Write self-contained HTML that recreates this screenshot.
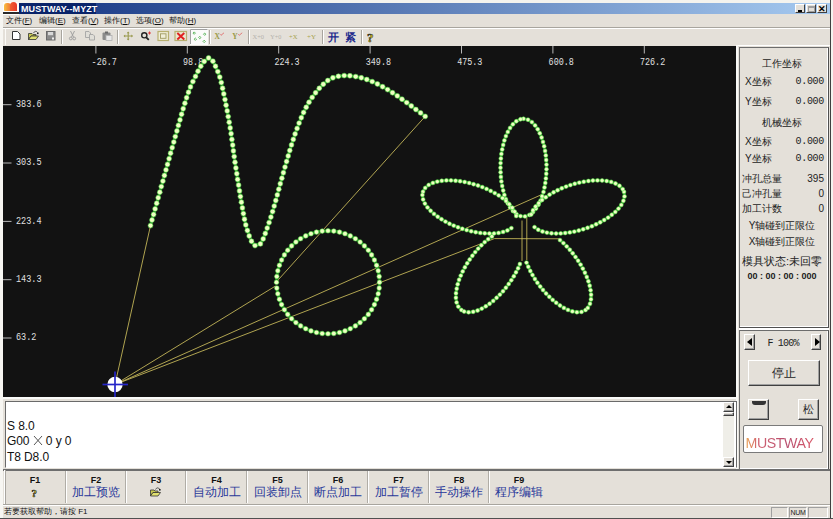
<!DOCTYPE html>
<html><head><meta charset="utf-8">
<style>
*{margin:0;padding:0;box-sizing:border-box}
html,body{width:833px;height:519px;overflow:hidden;background:#e4e0d9;font-family:"Liberation Sans",sans-serif;color:#000}
.a{position:absolute}
.cv{position:absolute;left:0;top:0}
.title{left:19px;top:3px;width:811px;height:11px;background:linear-gradient(to right,#0a246a 0px,#0a246a 77px,#22428c 77px,#a6caf0 811px)}
.ttext{left:21px;top:2px;font-size:9px;font-weight:bold;color:#fff;line-height:14px;letter-spacing:0.1px}
.wbtn{top:4px;width:10px;height:9px;background:#e4e0d9;border-top:1px solid #fff;border-left:1px solid #fff;border-right:1px solid #404040;border-bottom:1px solid #404040}
.menu{font-size:8px;line-height:10px;top:14px;color:#111}
.sep{width:2px;border-left:1px solid #a0a0a0;border-right:1px solid #fff}
.panel{font-size:10px;line-height:12px;color:#222}
.t{white-space:nowrap}
.fk{top:470px;height:34px;text-align:center}
.fkl{font-size:9px;font-weight:bold;line-height:10px;margin-top:5px;color:#111}
.fkt{font-size:12px;line-height:14px;color:#28389a;margin-top:0px}
.btn{background:#e4e0d9;border-top:1px solid #fff;border-left:1px solid #fff;border-right:1px solid #404040;border-bottom:1px solid #404040;box-shadow:inset -1px -1px 0 #a0a0a0}
</style></head><body>
<!-- window frame -->
<div class="a" style="left:0;top:0;width:833px;height:3px;background:#f4f3ee"></div>
<div class="a" style="left:0;top:0;width:3px;height:519px;background:#f7f6f2"></div>
<div class="a" style="left:830px;top:0;width:1px;height:519px;background:#404040"></div>
<div class="a" style="left:831px;top:0;width:2px;height:519px;background:#f4f3ee"></div>
<!-- title -->
<div class="a title"></div>
<div class="a" style="left:3px;top:2px;width:16px;height:13px;background:#fdfdfb">
  <div class="a" style="left:1px;top:1px;width:7px;height:8px;border-radius:3px 3px 0 1px;background:linear-gradient(to right,#f8c040,#f07030)"></div>
  <div class="a" style="left:7px;top:0px;width:7px;height:9px;border-radius:4px 4px 0 0;background:linear-gradient(to right,#f06030,#e83828)"></div>
  <div class="a" style="left:0px;top:10px;width:16px;height:2px;background:#2a2a2a"></div>
</div>
<div class="a ttext">MUSTWAY--MYZT</div>
<div class="a wbtn" style="left:795px"><div class="a" style="left:2px;top:5px;width:4px;height:2px;background:#000"></div></div>
<div class="a wbtn" style="left:806px"><div class="a" style="left:1px;top:1px;width:7px;height:6px;border:1px solid #a0a0a0;border-top-width:2px"></div></div>
<div class="a wbtn" style="left:817px;font-size:9px;line-height:8px;text-align:center;font-weight:bold">✕</div>
<!-- menu -->
<div class="a menu" style="left:6px;top:16px">文件(<u>F</u>)</div>
<div class="a menu" style="left:39px;top:16px">编辑(<u>E</u>)</div>
<div class="a menu" style="left:72px;top:16px">查看(<u>V</u>)</div>
<div class="a menu" style="left:104px;top:16px">操作(<u>T</u>)</div>
<div class="a menu" style="left:136px;top:16px">选项(<u>O</u>)</div>
<div class="a menu" style="left:169px;top:16px">帮助(<u>H</u>)</div>
<div class="a" style="left:3px;top:27px;width:827px;height:1px;background:#a8a59e"></div>
<div class="a" style="left:3px;top:28px;width:827px;height:1px;background:#fff"></div>
<!-- toolbar -->
<svg class="a" style="left:0;top:0" width="833" height="46" viewBox="0 0 833 46">
<g shape-rendering="crispEdges">
<rect x="5" y="28" width="1" height="17" fill="#fbfaf7"/>
<rect x="61" y="30" width="1" height="14" fill="#a8a59e"/><rect x="62" y="30" width="1" height="14" fill="#fff"/>
<rect x="117" y="30" width="1" height="14" fill="#a8a59e"/><rect x="118" y="30" width="1" height="14" fill="#fff"/>
<rect x="209" y="30" width="1" height="14" fill="#a8a59e"/><rect x="210" y="30" width="1" height="14" fill="#fff"/>
<rect x="248" y="30" width="1" height="14" fill="#a8a59e"/><rect x="249" y="30" width="1" height="14" fill="#fff"/>
<rect x="322" y="30" width="1" height="14" fill="#a8a59e"/><rect x="323" y="30" width="1" height="14" fill="#fff"/>
<rect x="361" y="30" width="1" height="14" fill="#a8a59e"/><rect x="362" y="30" width="1" height="14" fill="#fff"/>
</g>
<!-- new -->
<path d="M12.5 31.5H17.5L20 34V39.5H12.5Z" fill="#fff" stroke="#333" stroke-width="1"/>
<!-- open -->
<path d="M28.5 33.5H32L33 34.5H36V36H31L28.5 39.5Z" fill="#c8c850" stroke="#333" stroke-width="0.8"/>
<path d="M28.5 39.5L31 36H38.5L36 39.5Z" fill="#e0e070" stroke="#333" stroke-width="0.8"/>
<path d="M33.5 33C34.5 31 36.5 30.8 37.5 32.5" fill="none" stroke="#333" stroke-width="0.8"/><rect x="37" y="32.5" width="1.6" height="1.6" fill="#222"/>
<!-- save -->
<rect x="46.5" y="31.5" width="8.5" height="8.5" fill="#8a8a8a" stroke="#6a6a6a" stroke-width="1"/>
<rect x="48" y="32" width="5" height="3.2" fill="#d8d8d8"/><rect x="52" y="37.5" width="2" height="2" fill="#eee"/>
<!-- cut -->
<g stroke="#9a9a9a" stroke-width="0.9" fill="none"><path d="M70.5 31L73.5 37M74.5 31L71.5 37"/><circle cx="70.8" cy="38.5" r="1.4"/><circle cx="74.2" cy="38.5" r="1.4"/></g>
<!-- copy -->
<g fill="#e0ded8" stroke="#a5a5a5" stroke-width="0.9"><path d="M85.5 31.5H89L90.5 33V37.5H85.5Z"/><path d="M89.5 34.5H93L94.5 36V40H89.5Z"/></g>
<!-- paste -->
<rect x="102.5" y="32.5" width="8" height="7.5" rx="1" fill="#8a8a8a"/><rect x="105" y="31.5" width="3" height="2" fill="#6a6a6a"/>
<rect x="106" y="35.5" width="6" height="5" fill="#e8e8e8" stroke="#b0b0b0" stroke-width="0.8"/>
<!-- move -->
<g stroke="#9a9a50" stroke-width="1.1" fill="#9a9a50"><path d="M124 36H132.5M128.2 32V40" fill="none"/><path d="M128.2 31.5L126.8 33.2H129.6Z M128.2 40.5L126.8 38.8H129.6Z M123.5 36L125.2 34.6V37.4Z M133 36L131.3 34.6V37.4Z" stroke="none"/></g>
<!-- zoom -->
<circle cx="144.3" cy="35.3" r="2.6" fill="none" stroke="#222" stroke-width="1.4"/><path d="M146.2 37.3L148.8 39.9" stroke="#222" stroke-width="1.8"/>
<path d="M149.5 31.5V34.5M148 33H151" stroke="#e04040" stroke-width="1"/>
<!-- rect -->
<rect x="158" y="31.5" width="10.5" height="9" fill="#efeed8" stroke="#b8b070" stroke-width="1.2"/><rect x="160.5" y="33.8" width="5.5" height="4.5" fill="none" stroke="#a09a60" stroke-width="0.9"/>
<!-- red x -->
<rect x="175" y="31.5" width="11.5" height="9" fill="#eae6d0" stroke="#b8b070" stroke-width="1.2"/><path d="M177.3 33L184.3 39.5M184.3 33L177.3 39.5" stroke="#e02020" stroke-width="1.9"/>
<!-- dotted (pressed) -->
<rect x="190" y="29" width="18" height="16" fill="#fbfbfa"/><path d="M190.5 44V29.5H207.5" fill="none" stroke="#a0a0a0" stroke-width="1"/>
<g fill="none" stroke="#50b050" stroke-width="0.9"><path d="M194.2 31.9L195.4 33.1L194.2 34.3L193 33.1Z"/><path d="M204.7 33L205.9 34.2L204.7 35.4L203.5 34.2Z"/><path d="M199.8 36.3L201 37.5L199.8 38.7L198.6 37.5Z"/><path d="M195.3 38L196.5 39.2L195.3 40.4L194.1 39.2Z"/><path d="M204.2 40.2L205.4 41.4L204.2 42.6L203 41.4Z"/></g>
<!-- X check Y check -->
<g font-family="Liberation Serif" font-weight="bold" font-size="7.5" fill="#9a9a48"><text x="214.5" y="38.5">X</text><text x="232.3" y="38.5">Y</text></g>
<g stroke="#e06060" stroke-width="0.8" fill="none"><path d="M220 34.2L221 35.3L224 32.8"/><path d="M238.2 34.2L239.2 35.3L242.2 32.8"/></g>
<!-- X+0 etc -->
<g font-family="Liberation Serif" font-size="7" fill="#b4b2ac"><text x="252.5" y="39" textLength="11.5" lengthAdjust="spacingAndGlyphs">X+0</text><text x="270.3" y="39" textLength="11" lengthAdjust="spacingAndGlyphs">Y+0</text></g>
<g font-family="Liberation Serif" font-size="7" fill="#a8a450"><text x="289" y="39" textLength="8.5" lengthAdjust="spacingAndGlyphs">+X</text><text x="307" y="39" textLength="9" lengthAdjust="spacingAndGlyphs">+Y</text></g>
<!-- kai jin -->
<g font-size="11" font-weight="bold" fill="#1e2a8c"><text x="327.5" y="40.5">开</text><text x="345" y="40.5">紧</text></g>
<!-- help -->
<text x="367" y="41.5" font-family="Liberation Serif" font-weight="bold" font-size="13" fill="#e8d820" stroke="#222" stroke-width="0.6">?</text>
</svg>
<svg class="cv" width="833" height="519" viewBox="0 0 833 519">
<rect x="3" y="46" width="733" height="351" fill="#121212"/>
<g stroke="#b8b8b8" stroke-width="1"><line x1="95.9" y1="46" x2="95.9" y2="53.5"/><line x1="187.3" y1="46" x2="187.3" y2="53.5"/><line x1="278.7" y1="46" x2="278.7" y2="53.5"/><line x1="370.1" y1="46" x2="370.1" y2="53.5"/><line x1="461.5" y1="46" x2="461.5" y2="53.5"/><line x1="552.9" y1="46" x2="552.9" y2="53.5"/><line x1="644.3" y1="46" x2="644.3" y2="53.5"/><line x1="3" y1="104.7" x2="11.5" y2="104.7"/><line x1="3" y1="163.0" x2="11.5" y2="163.0"/><line x1="3" y1="221.4" x2="11.5" y2="221.4"/><line x1="3" y1="279.7" x2="11.5" y2="279.7"/><line x1="3" y1="338.0" x2="11.5" y2="338.0"/></g>
<g fill="#e0e0e0" font-family="Liberation Mono" font-size="10.5"><text x="91.6" y="65.3" textLength="25.2" lengthAdjust="spacingAndGlyphs">-26.7</text><text x="183.0" y="65.3" textLength="20.2" lengthAdjust="spacingAndGlyphs">98.8</text><text x="274.4" y="65.3" textLength="25.2" lengthAdjust="spacingAndGlyphs">224.3</text><text x="365.8" y="65.3" textLength="25.2" lengthAdjust="spacingAndGlyphs">349.8</text><text x="457.2" y="65.3" textLength="25.2" lengthAdjust="spacingAndGlyphs">475.3</text><text x="548.6" y="65.3" textLength="25.2" lengthAdjust="spacingAndGlyphs">600.8</text><text x="640.0" y="65.3" textLength="25.2" lengthAdjust="spacingAndGlyphs">726.2</text><text x="16" y="106.8" textLength="25.5" lengthAdjust="spacingAndGlyphs">383.6</text><text x="16" y="165.1" textLength="25.5" lengthAdjust="spacingAndGlyphs">303.5</text><text x="16" y="223.5" textLength="25.5" lengthAdjust="spacingAndGlyphs">223.4</text><text x="16" y="281.8" textLength="25.5" lengthAdjust="spacingAndGlyphs">143.3</text><text x="16" y="340.1" textLength="20.4" lengthAdjust="spacingAndGlyphs">63.2</text></g>
<g stroke="#ccbe5c" stroke-width="0.85" fill="none"><line x1="115" y1="384.5" x2="150.5" y2="225.6"/><line x1="425.2" y1="116.4" x2="276.3" y2="282"/><line x1="115" y1="384.5" x2="275.5" y2="286"/><line x1="115" y1="384.5" x2="543" y2="194"/><line x1="115" y1="384.5" x2="494.4" y2="238.6"/><line x1="494.4" y1="238.6" x2="560.5" y2="238.8"/><line x1="522" y1="220.5" x2="522" y2="261"/><line x1="526.8" y1="216.6" x2="526.8" y2="260"/></g>
<path d="M150.5 225.6L152.0 220.0M152.0 220.0L153.6 214.5M153.6 214.5L155.1 208.9M155.1 208.9L156.7 203.3M156.7 203.3L158.2 197.8M158.2 197.8L159.8 192.2M159.8 192.2L161.3 186.6M161.3 186.6L162.9 181.1M162.9 181.1L164.4 175.5M164.4 175.5L166.0 169.9M166.0 169.9L167.5 164.4M167.5 164.4L169.1 158.8M169.1 158.8L170.6 153.2M170.6 153.2L172.2 147.7M172.2 147.7L173.8 142.1M173.8 142.1L175.3 136.6M175.3 136.6L176.9 131.0M176.9 131.0L178.4 125.4M178.4 125.4L180.0 119.9M180.0 119.9L181.6 114.3M181.6 114.3L183.2 108.8M183.2 108.8L184.9 103.2M184.9 103.2L186.6 97.7M186.6 97.7L188.5 92.3M188.5 92.3L190.5 86.9M190.5 86.9L192.9 81.6M192.9 81.6L195.5 76.4M195.5 76.4L198.0 71.2M198.0 71.2L200.8 66.2M200.8 66.2L204.2 61.5M204.2 61.5L208.6 57.9M208.6 57.9L212.9 61.2M212.9 61.2L215.5 66.3M215.5 66.3L217.8 71.6M217.8 71.6L219.8 77.1M219.8 77.1L221.3 82.6M221.3 82.6L222.6 88.3M222.6 88.3L223.8 93.9M223.8 93.9L225.0 99.6M225.0 99.6L226.1 105.2M226.1 105.2L227.2 110.9M227.2 110.9L228.2 116.6M228.2 116.6L229.2 122.3M229.2 122.3L230.2 128.0M230.2 128.0L231.1 133.7M231.1 133.7L231.9 139.4M231.9 139.4L232.7 145.1M232.7 145.1L233.4 150.9M233.4 150.9L234.2 156.6M234.2 156.6L235.0 162.3M235.0 162.3L235.9 168.0M235.9 168.0L236.8 173.7M236.8 173.7L237.6 179.4M237.6 179.4L238.6 185.1M238.6 185.1L239.5 190.9M239.5 190.9L240.4 196.6M240.4 196.6L241.4 202.2M241.4 202.2L242.4 207.9M242.4 207.9L243.4 213.6M243.4 213.6L244.5 219.3M244.5 219.3L245.8 224.9M245.8 224.9L247.4 230.5M247.4 230.5L249.2 236.0M249.2 236.0L251.5 241.3M251.5 241.3L255.0 245.6M255.0 245.6L260.4 243.9M260.4 243.9L263.2 238.9M263.2 238.9L265.3 233.5M265.3 233.5L267.2 228.1M267.2 228.1L269.1 222.6M269.1 222.6L270.9 217.1M270.9 217.1L272.6 211.6M272.6 211.6L274.2 206.1M274.2 206.1L275.8 200.5M275.8 200.5L277.3 194.9M277.3 194.9L278.8 189.3M278.8 189.3L280.3 183.8M280.3 183.8L281.9 178.2M281.9 178.2L283.4 172.7M283.4 172.7L285.0 167.1M285.0 167.1L286.6 161.5M286.6 161.5L288.2 156.0M288.2 156.0L289.8 150.5M289.8 150.5L291.5 144.9M291.5 144.9L293.3 139.4M293.3 139.4L295.1 134.0M295.1 134.0L297.1 128.5M297.1 128.5L299.1 123.1M299.1 123.1L301.3 117.7M301.3 117.7L303.6 112.5M303.6 112.5L306.2 107.3M306.2 107.3L309.0 102.3M309.0 102.3L312.2 97.4M312.2 97.4L315.6 92.8M315.6 92.8L319.3 88.3M319.3 88.3L323.3 84.2M323.3 84.2L327.8 80.5M327.8 80.5L332.9 77.8M332.9 77.8L338.4 76.3M338.4 76.3L344.2 75.6M344.2 75.6L349.9 75.8M349.9 75.8L355.7 76.6M355.7 76.6L361.3 77.8M361.3 77.8L366.8 79.5M366.8 79.5L372.2 81.6M372.2 81.6L377.4 84.0M377.4 84.0L382.6 86.7M382.6 86.7L387.6 89.6M387.6 89.6L392.5 92.7M392.5 92.7L397.3 95.9M397.3 95.9L402.0 99.2M402.0 99.2L406.7 102.6M406.7 102.6L411.3 106.0M411.3 106.0L415.9 109.5M415.9 109.5L420.6 112.9M420.6 112.9L425.2 116.4M276.5 282.3L276.8 276.5M276.8 276.5L277.8 270.8M277.8 270.8L279.4 265.3M279.4 265.3L281.6 260.0M281.6 260.0L284.4 254.9M284.4 254.9L287.7 250.2M287.7 250.2L291.6 245.9M291.6 245.9L295.9 242.0M295.9 242.0L300.6 238.7M300.6 238.7L305.7 235.9M305.7 235.9L311.0 233.7M311.0 233.7L316.5 232.1M316.5 232.1L322.2 231.1M322.2 231.1L328.0 230.8M328.0 230.8L333.8 231.1M333.8 231.1L339.5 232.1M339.5 232.1L345.0 233.7M345.0 233.7L350.3 235.9M350.3 235.9L355.4 238.7M355.4 238.7L360.1 242.0M360.1 242.0L364.4 245.9M364.4 245.9L368.3 250.2M368.3 250.2L371.6 254.9M371.6 254.9L374.4 260.0M374.4 260.0L376.6 265.3M376.6 265.3L378.2 270.8M378.2 270.8L379.2 276.5M379.2 276.5L379.5 282.3M379.5 282.3L379.2 288.1M379.2 288.1L378.2 293.8M378.2 293.8L376.6 299.3M376.6 299.3L374.4 304.6M374.4 304.6L371.6 309.7M371.6 309.7L368.3 314.4M368.3 314.4L364.4 318.7M364.4 318.7L360.1 322.6M360.1 322.6L355.4 325.9M355.4 325.9L350.3 328.7M350.3 328.7L345.0 330.9M345.0 330.9L339.5 332.5M339.5 332.5L333.8 333.5M333.8 333.5L328.0 333.8M328.0 333.8L322.2 333.5M322.2 333.5L316.5 332.5M316.5 332.5L311.0 330.9M311.0 330.9L305.7 328.7M305.7 328.7L300.6 325.9M300.6 325.9L295.9 322.6M295.9 322.6L291.6 318.7M291.6 318.7L287.7 314.4M287.7 314.4L284.4 309.7M284.4 309.7L281.6 304.6M281.6 304.6L279.4 299.3M279.4 299.3L277.8 293.8M277.8 293.8L276.8 288.1M523.5 118.8L528.0 119.7M528.0 119.7L531.9 122.1M531.9 122.1L535.1 125.4M535.1 125.4L537.7 129.2M537.7 129.2L539.8 133.3M539.8 133.3L541.6 137.5M541.6 137.5L543.0 141.9M543.0 141.9L544.2 146.3M544.2 146.3L545.1 150.9M545.1 150.9L545.8 155.4M545.8 155.4L546.2 160.0M546.2 160.0L546.5 164.6M546.5 164.6L546.5 169.2M546.5 169.2L546.3 173.8M546.3 173.8L545.9 178.4M545.9 178.4L545.3 182.9M545.3 182.9L544.5 187.4M544.5 187.4L543.5 191.9M543.5 191.9L542.1 196.3M542.1 196.3L540.5 200.6M540.5 200.6L538.5 204.7M538.5 204.7L536.0 208.6M536.0 208.6L533.0 212.1M533.0 212.1L529.4 214.9M529.4 214.9L525.0 216.4M525.0 216.4L520.5 216.1M520.5 216.1L516.4 214.1M516.4 214.1L512.9 211.0M512.9 211.0L510.1 207.4M510.1 207.4L507.8 203.4M507.8 203.4L505.9 199.2M505.9 199.2L504.4 194.9M504.4 194.9L503.2 190.5M503.2 190.5L502.2 186.0M502.2 186.0L501.4 181.4M501.4 181.4L500.9 176.9M500.9 176.9L500.6 172.3M500.6 172.3L500.5 167.7M500.5 167.7L500.6 163.1M500.6 163.1L500.9 158.5M500.9 158.5L501.4 153.9M501.4 153.9L502.2 149.4M502.2 149.4L503.2 144.9M503.2 144.9L504.4 140.4M504.4 140.4L505.9 136.1M505.9 136.1L507.8 131.9M507.8 131.9L510.1 127.9M510.1 127.9L512.9 124.3M512.9 124.3L516.3 121.2M516.3 121.2L520.5 119.2M624.0 191.8L624.5 196.4M624.5 196.4L623.4 200.8M623.4 200.8L621.3 204.9M621.3 204.9L618.5 208.6M618.5 208.6L615.3 211.9M615.3 211.9L611.8 214.8M611.8 214.8L608.1 217.6M608.1 217.6L604.2 220.0M604.2 220.0L600.2 222.3M600.2 222.3L596.1 224.3M596.1 224.3L591.9 226.2M591.9 226.2L587.6 227.8M587.6 227.8L583.2 229.3M583.2 229.3L578.8 230.5M578.8 230.5L574.3 231.6M574.3 231.6L569.8 232.4M569.8 232.4L565.2 233.0M565.2 233.0L560.7 233.4M560.7 233.4L556.1 233.5M556.1 233.5L551.5 233.3M551.5 233.3L546.9 232.6M546.9 232.6L542.5 231.5M542.5 231.5L538.2 229.7M538.2 229.7L534.5 227.1M531.2 214.5L533.0 210.3M533.0 210.3L535.6 206.5M535.6 206.5L538.7 203.1M538.7 203.1L542.1 200.0M542.1 200.0L545.8 197.2M545.8 197.2L549.6 194.6M549.6 194.6L553.6 192.3M553.6 192.3L557.6 190.2M557.6 190.2L561.8 188.3M561.8 188.3L566.1 186.6M566.1 186.6L570.4 185.1M570.4 185.1L574.8 183.7M574.8 183.7L579.3 182.6M579.3 182.6L583.8 181.7M583.8 181.7L588.4 181.0M588.4 181.0L592.9 180.5M592.9 180.5L597.5 180.4M597.5 180.4L602.1 180.5M602.1 180.5L606.7 181.0M606.7 181.0L611.2 181.9M611.2 181.9L615.5 183.5M615.5 183.5L619.5 185.8M619.5 185.8L622.7 189.1M585.6 310.0L581.5 311.9M581.5 311.9L576.9 312.2M576.9 312.2L572.4 311.4M572.4 311.4L568.0 309.9M568.0 309.9L563.9 307.9M563.9 307.9L560.0 305.5M560.0 305.5L556.2 302.8M556.2 302.8L552.7 299.9M552.7 299.9L549.3 296.8M549.3 296.8L546.1 293.5M546.1 293.5L543.0 290.0M543.0 290.0L540.2 286.5M540.2 286.5L537.4 282.8M537.4 282.8L534.9 279.0M534.9 279.0L532.5 275.0M532.5 275.0L530.3 271.0M530.3 271.0L528.3 266.8M528.3 266.8L526.5 262.6M560.0 240.1L563.4 243.1M563.4 243.1L566.7 246.4M566.7 246.4L569.8 249.8M569.8 249.8L572.7 253.3M572.7 253.3L575.5 257.0M575.5 257.0L578.1 260.7M578.1 260.7L580.6 264.6M580.6 264.6L582.8 268.6M582.8 268.6L584.9 272.7M584.9 272.7L586.8 277.0M586.8 277.0L588.4 281.3M588.4 281.3L589.7 285.7M589.7 285.7L590.6 290.2M590.6 290.2L591.1 294.8M591.1 294.8L591.0 299.3M591.0 299.3L590.0 303.8M590.0 303.8L587.8 307.9M461.4 310.0L458.3 306.6M458.3 306.6L456.6 302.4M456.6 302.4L455.9 297.8M455.9 297.8L456.0 293.2M456.0 293.2L456.7 288.7M456.7 288.7L457.7 284.2M457.7 284.2L459.1 279.8M459.1 279.8L460.8 275.6M460.8 275.6L462.7 271.4M462.7 271.4L464.9 267.3M464.9 267.3L467.2 263.3M467.2 263.3L469.7 259.5M469.7 259.5L472.4 255.7M472.4 255.7L475.2 252.1M475.2 252.1L478.2 248.6M478.2 248.6L481.4 245.3M481.4 245.3L484.7 242.1M484.7 242.1L488.2 239.1M488.2 239.1L491.9 236.4M519.9 264.0L518.1 268.2M518.1 268.2L516.0 272.3M516.0 272.3L513.8 276.3M513.8 276.3L511.3 280.2M511.3 280.2L508.7 284.0M508.7 284.0L505.9 287.7M505.9 287.7L503.0 291.2M503.0 291.2L499.9 294.6M499.9 294.6L496.6 297.8M496.6 297.8L493.2 300.9M493.2 300.9L489.6 303.7M489.6 303.7L485.8 306.3M485.8 306.3L481.8 308.6M481.8 308.6L477.6 310.5M477.6 310.5L473.2 311.8M473.2 311.8L468.6 312.3M468.6 312.3L464.1 311.5M423.0 191.8L425.2 187.9M425.2 187.9L428.7 184.9M428.7 184.9L432.9 182.9M432.9 182.9L437.3 181.6M437.3 181.6L441.8 180.8M441.8 180.8L446.4 180.4M446.4 180.4L451.0 180.4M451.0 180.4L455.6 180.7M455.6 180.7L460.1 181.2M460.1 181.2L464.7 182.0M464.7 182.0L469.2 183.0M469.2 183.0L473.6 184.2M473.6 184.2L478.0 185.5M478.0 185.5L482.3 187.1M482.3 187.1L486.6 188.9M486.6 188.9L490.7 190.9M490.7 190.9L494.8 193.1M494.8 193.1L498.7 195.4M498.7 195.4L502.5 198.1M502.5 198.1L506.0 201.0M506.0 201.0L509.3 204.2M509.3 204.2L512.3 207.7M512.3 207.7L514.7 211.6M514.7 211.6L516.2 216.0M511.4 228.1L507.4 230.4M507.4 230.4L503.1 231.9M503.1 231.9L498.6 232.9M498.6 232.9L494.0 233.4M494.0 233.4L489.4 233.5M489.4 233.5L484.8 233.3M484.8 233.3L480.3 232.9M480.3 232.9L475.7 232.2M475.7 232.2L471.2 231.3M471.2 231.3L466.7 230.1M466.7 230.1L462.3 228.8M462.3 228.8L458.0 227.3M458.0 227.3L453.7 225.6M453.7 225.6L449.5 223.7M449.5 223.7L445.5 221.6M445.5 221.6L441.5 219.2M441.5 219.2L437.7 216.7M437.7 216.7L434.0 213.9M434.0 213.9L430.6 210.8M430.6 210.8L427.5 207.4M427.5 207.4L424.9 203.6M424.9 203.6L423.1 199.4M423.1 199.4L422.4 194.9" stroke="#1d7a1d" stroke-width="3.2" fill="none" stroke-linecap="round"/>
<g fill="#f0ffc4" stroke="#4ee044" stroke-width="0.55"><circle cx="150.5" cy="225.6" r="2.45"/><circle cx="152.0" cy="220.0" r="2.45"/><circle cx="153.6" cy="214.5" r="2.45"/><circle cx="155.1" cy="208.9" r="2.45"/><circle cx="156.7" cy="203.3" r="2.45"/><circle cx="158.2" cy="197.8" r="2.45"/><circle cx="159.8" cy="192.2" r="2.45"/><circle cx="161.3" cy="186.6" r="2.45"/><circle cx="162.9" cy="181.1" r="2.45"/><circle cx="164.4" cy="175.5" r="2.45"/><circle cx="166.0" cy="169.9" r="2.45"/><circle cx="167.5" cy="164.4" r="2.45"/><circle cx="169.1" cy="158.8" r="2.45"/><circle cx="170.6" cy="153.2" r="2.45"/><circle cx="172.2" cy="147.7" r="2.45"/><circle cx="173.8" cy="142.1" r="2.45"/><circle cx="175.3" cy="136.6" r="2.45"/><circle cx="176.9" cy="131.0" r="2.45"/><circle cx="178.4" cy="125.4" r="2.45"/><circle cx="180.0" cy="119.9" r="2.45"/><circle cx="181.6" cy="114.3" r="2.45"/><circle cx="183.2" cy="108.8" r="2.45"/><circle cx="184.9" cy="103.2" r="2.45"/><circle cx="186.6" cy="97.7" r="2.45"/><circle cx="188.5" cy="92.3" r="2.45"/><circle cx="190.5" cy="86.9" r="2.45"/><circle cx="192.9" cy="81.6" r="2.45"/><circle cx="195.5" cy="76.4" r="2.45"/><circle cx="198.0" cy="71.2" r="2.45"/><circle cx="200.8" cy="66.2" r="2.45"/><circle cx="204.2" cy="61.5" r="2.45"/><circle cx="208.6" cy="57.9" r="2.45"/><circle cx="212.9" cy="61.2" r="2.45"/><circle cx="215.5" cy="66.3" r="2.45"/><circle cx="217.8" cy="71.6" r="2.45"/><circle cx="219.8" cy="77.1" r="2.45"/><circle cx="221.3" cy="82.6" r="2.45"/><circle cx="222.6" cy="88.3" r="2.45"/><circle cx="223.8" cy="93.9" r="2.45"/><circle cx="225.0" cy="99.6" r="2.45"/><circle cx="226.1" cy="105.2" r="2.45"/><circle cx="227.2" cy="110.9" r="2.45"/><circle cx="228.2" cy="116.6" r="2.45"/><circle cx="229.2" cy="122.3" r="2.45"/><circle cx="230.2" cy="128.0" r="2.45"/><circle cx="231.1" cy="133.7" r="2.45"/><circle cx="231.9" cy="139.4" r="2.45"/><circle cx="232.7" cy="145.1" r="2.45"/><circle cx="233.4" cy="150.9" r="2.45"/><circle cx="234.2" cy="156.6" r="2.45"/><circle cx="235.0" cy="162.3" r="2.45"/><circle cx="235.9" cy="168.0" r="2.45"/><circle cx="236.8" cy="173.7" r="2.45"/><circle cx="237.6" cy="179.4" r="2.45"/><circle cx="238.6" cy="185.1" r="2.45"/><circle cx="239.5" cy="190.9" r="2.45"/><circle cx="240.4" cy="196.6" r="2.45"/><circle cx="241.4" cy="202.2" r="2.45"/><circle cx="242.4" cy="207.9" r="2.45"/><circle cx="243.4" cy="213.6" r="2.45"/><circle cx="244.5" cy="219.3" r="2.45"/><circle cx="245.8" cy="224.9" r="2.45"/><circle cx="247.4" cy="230.5" r="2.45"/><circle cx="249.2" cy="236.0" r="2.45"/><circle cx="251.5" cy="241.3" r="2.45"/><circle cx="255.0" cy="245.6" r="2.45"/><circle cx="260.4" cy="243.9" r="2.45"/><circle cx="263.2" cy="238.9" r="2.45"/><circle cx="265.3" cy="233.5" r="2.45"/><circle cx="267.2" cy="228.1" r="2.45"/><circle cx="269.1" cy="222.6" r="2.45"/><circle cx="270.9" cy="217.1" r="2.45"/><circle cx="272.6" cy="211.6" r="2.45"/><circle cx="274.2" cy="206.1" r="2.45"/><circle cx="275.8" cy="200.5" r="2.45"/><circle cx="277.3" cy="194.9" r="2.45"/><circle cx="278.8" cy="189.3" r="2.45"/><circle cx="280.3" cy="183.8" r="2.45"/><circle cx="281.9" cy="178.2" r="2.45"/><circle cx="283.4" cy="172.7" r="2.45"/><circle cx="285.0" cy="167.1" r="2.45"/><circle cx="286.6" cy="161.5" r="2.45"/><circle cx="288.2" cy="156.0" r="2.45"/><circle cx="289.8" cy="150.5" r="2.45"/><circle cx="291.5" cy="144.9" r="2.45"/><circle cx="293.3" cy="139.4" r="2.45"/><circle cx="295.1" cy="134.0" r="2.45"/><circle cx="297.1" cy="128.5" r="2.45"/><circle cx="299.1" cy="123.1" r="2.45"/><circle cx="301.3" cy="117.7" r="2.45"/><circle cx="303.6" cy="112.5" r="2.45"/><circle cx="306.2" cy="107.3" r="2.45"/><circle cx="309.0" cy="102.3" r="2.45"/><circle cx="312.2" cy="97.4" r="2.45"/><circle cx="315.6" cy="92.8" r="2.45"/><circle cx="319.3" cy="88.3" r="2.45"/><circle cx="323.3" cy="84.2" r="2.45"/><circle cx="327.8" cy="80.5" r="2.45"/><circle cx="332.9" cy="77.8" r="2.45"/><circle cx="338.4" cy="76.3" r="2.45"/><circle cx="344.2" cy="75.6" r="2.45"/><circle cx="349.9" cy="75.8" r="2.45"/><circle cx="355.7" cy="76.6" r="2.45"/><circle cx="361.3" cy="77.8" r="2.45"/><circle cx="366.8" cy="79.5" r="2.45"/><circle cx="372.2" cy="81.6" r="2.45"/><circle cx="377.4" cy="84.0" r="2.45"/><circle cx="382.6" cy="86.7" r="2.45"/><circle cx="387.6" cy="89.6" r="2.45"/><circle cx="392.5" cy="92.7" r="2.45"/><circle cx="397.3" cy="95.9" r="2.45"/><circle cx="402.0" cy="99.2" r="2.45"/><circle cx="406.7" cy="102.6" r="2.45"/><circle cx="411.3" cy="106.0" r="2.45"/><circle cx="415.9" cy="109.5" r="2.45"/><circle cx="420.6" cy="112.9" r="2.45"/><circle cx="425.2" cy="116.4" r="2.45"/><circle cx="276.5" cy="282.3" r="2.3"/><circle cx="276.8" cy="276.5" r="2.3"/><circle cx="277.8" cy="270.8" r="2.3"/><circle cx="279.4" cy="265.3" r="2.3"/><circle cx="281.6" cy="260.0" r="2.3"/><circle cx="284.4" cy="254.9" r="2.3"/><circle cx="287.7" cy="250.2" r="2.3"/><circle cx="291.6" cy="245.9" r="2.3"/><circle cx="295.9" cy="242.0" r="2.3"/><circle cx="300.6" cy="238.7" r="2.3"/><circle cx="305.7" cy="235.9" r="2.3"/><circle cx="311.0" cy="233.7" r="2.3"/><circle cx="316.5" cy="232.1" r="2.3"/><circle cx="322.2" cy="231.1" r="2.3"/><circle cx="328.0" cy="230.8" r="2.3"/><circle cx="333.8" cy="231.1" r="2.3"/><circle cx="339.5" cy="232.1" r="2.3"/><circle cx="345.0" cy="233.7" r="2.3"/><circle cx="350.3" cy="235.9" r="2.3"/><circle cx="355.4" cy="238.7" r="2.3"/><circle cx="360.1" cy="242.0" r="2.3"/><circle cx="364.4" cy="245.9" r="2.3"/><circle cx="368.3" cy="250.2" r="2.3"/><circle cx="371.6" cy="254.9" r="2.3"/><circle cx="374.4" cy="260.0" r="2.3"/><circle cx="376.6" cy="265.3" r="2.3"/><circle cx="378.2" cy="270.8" r="2.3"/><circle cx="379.2" cy="276.5" r="2.3"/><circle cx="379.5" cy="282.3" r="2.3"/><circle cx="379.2" cy="288.1" r="2.3"/><circle cx="378.2" cy="293.8" r="2.3"/><circle cx="376.6" cy="299.3" r="2.3"/><circle cx="374.4" cy="304.6" r="2.3"/><circle cx="371.6" cy="309.7" r="2.3"/><circle cx="368.3" cy="314.4" r="2.3"/><circle cx="364.4" cy="318.7" r="2.3"/><circle cx="360.1" cy="322.6" r="2.3"/><circle cx="355.4" cy="325.9" r="2.3"/><circle cx="350.3" cy="328.7" r="2.3"/><circle cx="345.0" cy="330.9" r="2.3"/><circle cx="339.5" cy="332.5" r="2.3"/><circle cx="333.8" cy="333.5" r="2.3"/><circle cx="328.0" cy="333.8" r="2.3"/><circle cx="322.2" cy="333.5" r="2.3"/><circle cx="316.5" cy="332.5" r="2.3"/><circle cx="311.0" cy="330.9" r="2.3"/><circle cx="305.7" cy="328.7" r="2.3"/><circle cx="300.6" cy="325.9" r="2.3"/><circle cx="295.9" cy="322.6" r="2.3"/><circle cx="291.6" cy="318.7" r="2.3"/><circle cx="287.7" cy="314.4" r="2.3"/><circle cx="284.4" cy="309.7" r="2.3"/><circle cx="281.6" cy="304.6" r="2.3"/><circle cx="279.4" cy="299.3" r="2.3"/><circle cx="277.8" cy="293.8" r="2.3"/><circle cx="276.8" cy="288.1" r="2.3"/><circle cx="523.5" cy="118.8" r="1.95"/><circle cx="528.0" cy="119.7" r="1.95"/><circle cx="531.9" cy="122.1" r="1.95"/><circle cx="535.1" cy="125.4" r="1.95"/><circle cx="537.7" cy="129.2" r="1.95"/><circle cx="539.8" cy="133.3" r="1.95"/><circle cx="541.6" cy="137.5" r="1.95"/><circle cx="543.0" cy="141.9" r="1.95"/><circle cx="544.2" cy="146.3" r="1.95"/><circle cx="545.1" cy="150.9" r="1.95"/><circle cx="545.8" cy="155.4" r="1.95"/><circle cx="546.2" cy="160.0" r="1.95"/><circle cx="546.5" cy="164.6" r="1.95"/><circle cx="546.5" cy="169.2" r="1.95"/><circle cx="546.3" cy="173.8" r="1.95"/><circle cx="545.9" cy="178.4" r="1.95"/><circle cx="545.3" cy="182.9" r="1.95"/><circle cx="544.5" cy="187.4" r="1.95"/><circle cx="543.5" cy="191.9" r="1.95"/><circle cx="542.1" cy="196.3" r="1.95"/><circle cx="540.5" cy="200.6" r="1.95"/><circle cx="538.5" cy="204.7" r="1.95"/><circle cx="536.0" cy="208.6" r="1.95"/><circle cx="533.0" cy="212.1" r="1.95"/><circle cx="529.4" cy="214.9" r="1.95"/><circle cx="525.0" cy="216.4" r="1.95"/><circle cx="520.5" cy="216.1" r="1.95"/><circle cx="516.4" cy="214.1" r="1.95"/><circle cx="512.9" cy="211.0" r="1.95"/><circle cx="510.1" cy="207.4" r="1.95"/><circle cx="507.8" cy="203.4" r="1.95"/><circle cx="505.9" cy="199.2" r="1.95"/><circle cx="504.4" cy="194.9" r="1.95"/><circle cx="503.2" cy="190.5" r="1.95"/><circle cx="502.2" cy="186.0" r="1.95"/><circle cx="501.4" cy="181.4" r="1.95"/><circle cx="500.9" cy="176.9" r="1.95"/><circle cx="500.6" cy="172.3" r="1.95"/><circle cx="500.5" cy="167.7" r="1.95"/><circle cx="500.6" cy="163.1" r="1.95"/><circle cx="500.9" cy="158.5" r="1.95"/><circle cx="501.4" cy="153.9" r="1.95"/><circle cx="502.2" cy="149.4" r="1.95"/><circle cx="503.2" cy="144.9" r="1.95"/><circle cx="504.4" cy="140.4" r="1.95"/><circle cx="505.9" cy="136.1" r="1.95"/><circle cx="507.8" cy="131.9" r="1.95"/><circle cx="510.1" cy="127.9" r="1.95"/><circle cx="512.9" cy="124.3" r="1.95"/><circle cx="516.3" cy="121.2" r="1.95"/><circle cx="520.5" cy="119.2" r="1.95"/><circle cx="624.0" cy="191.8" r="1.95"/><circle cx="624.5" cy="196.4" r="1.95"/><circle cx="623.4" cy="200.8" r="1.95"/><circle cx="621.3" cy="204.9" r="1.95"/><circle cx="618.5" cy="208.6" r="1.95"/><circle cx="615.3" cy="211.9" r="1.95"/><circle cx="611.8" cy="214.8" r="1.95"/><circle cx="608.1" cy="217.6" r="1.95"/><circle cx="604.2" cy="220.0" r="1.95"/><circle cx="600.2" cy="222.3" r="1.95"/><circle cx="596.1" cy="224.3" r="1.95"/><circle cx="591.9" cy="226.2" r="1.95"/><circle cx="587.6" cy="227.8" r="1.95"/><circle cx="583.2" cy="229.3" r="1.95"/><circle cx="578.8" cy="230.5" r="1.95"/><circle cx="574.3" cy="231.6" r="1.95"/><circle cx="569.8" cy="232.4" r="1.95"/><circle cx="565.2" cy="233.0" r="1.95"/><circle cx="560.7" cy="233.4" r="1.95"/><circle cx="556.1" cy="233.5" r="1.95"/><circle cx="551.5" cy="233.3" r="1.95"/><circle cx="546.9" cy="232.6" r="1.95"/><circle cx="542.5" cy="231.5" r="1.95"/><circle cx="538.2" cy="229.7" r="1.95"/><circle cx="534.5" cy="227.1" r="1.95"/><circle cx="531.2" cy="214.5" r="1.95"/><circle cx="533.0" cy="210.3" r="1.95"/><circle cx="535.6" cy="206.5" r="1.95"/><circle cx="538.7" cy="203.1" r="1.95"/><circle cx="542.1" cy="200.0" r="1.95"/><circle cx="545.8" cy="197.2" r="1.95"/><circle cx="549.6" cy="194.6" r="1.95"/><circle cx="553.6" cy="192.3" r="1.95"/><circle cx="557.6" cy="190.2" r="1.95"/><circle cx="561.8" cy="188.3" r="1.95"/><circle cx="566.1" cy="186.6" r="1.95"/><circle cx="570.4" cy="185.1" r="1.95"/><circle cx="574.8" cy="183.7" r="1.95"/><circle cx="579.3" cy="182.6" r="1.95"/><circle cx="583.8" cy="181.7" r="1.95"/><circle cx="588.4" cy="181.0" r="1.95"/><circle cx="592.9" cy="180.5" r="1.95"/><circle cx="597.5" cy="180.4" r="1.95"/><circle cx="602.1" cy="180.5" r="1.95"/><circle cx="606.7" cy="181.0" r="1.95"/><circle cx="611.2" cy="181.9" r="1.95"/><circle cx="615.5" cy="183.5" r="1.95"/><circle cx="619.5" cy="185.8" r="1.95"/><circle cx="622.7" cy="189.1" r="1.95"/><circle cx="585.6" cy="310.0" r="1.95"/><circle cx="581.5" cy="311.9" r="1.95"/><circle cx="576.9" cy="312.2" r="1.95"/><circle cx="572.4" cy="311.4" r="1.95"/><circle cx="568.0" cy="309.9" r="1.95"/><circle cx="563.9" cy="307.9" r="1.95"/><circle cx="560.0" cy="305.5" r="1.95"/><circle cx="556.2" cy="302.8" r="1.95"/><circle cx="552.7" cy="299.9" r="1.95"/><circle cx="549.3" cy="296.8" r="1.95"/><circle cx="546.1" cy="293.5" r="1.95"/><circle cx="543.0" cy="290.0" r="1.95"/><circle cx="540.2" cy="286.5" r="1.95"/><circle cx="537.4" cy="282.8" r="1.95"/><circle cx="534.9" cy="279.0" r="1.95"/><circle cx="532.5" cy="275.0" r="1.95"/><circle cx="530.3" cy="271.0" r="1.95"/><circle cx="528.3" cy="266.8" r="1.95"/><circle cx="526.5" cy="262.6" r="1.95"/><circle cx="560.0" cy="240.1" r="1.95"/><circle cx="563.4" cy="243.1" r="1.95"/><circle cx="566.7" cy="246.4" r="1.95"/><circle cx="569.8" cy="249.8" r="1.95"/><circle cx="572.7" cy="253.3" r="1.95"/><circle cx="575.5" cy="257.0" r="1.95"/><circle cx="578.1" cy="260.7" r="1.95"/><circle cx="580.6" cy="264.6" r="1.95"/><circle cx="582.8" cy="268.6" r="1.95"/><circle cx="584.9" cy="272.7" r="1.95"/><circle cx="586.8" cy="277.0" r="1.95"/><circle cx="588.4" cy="281.3" r="1.95"/><circle cx="589.7" cy="285.7" r="1.95"/><circle cx="590.6" cy="290.2" r="1.95"/><circle cx="591.1" cy="294.8" r="1.95"/><circle cx="591.0" cy="299.3" r="1.95"/><circle cx="590.0" cy="303.8" r="1.95"/><circle cx="587.8" cy="307.9" r="1.95"/><circle cx="461.4" cy="310.0" r="1.95"/><circle cx="458.3" cy="306.6" r="1.95"/><circle cx="456.6" cy="302.4" r="1.95"/><circle cx="455.9" cy="297.8" r="1.95"/><circle cx="456.0" cy="293.2" r="1.95"/><circle cx="456.7" cy="288.7" r="1.95"/><circle cx="457.7" cy="284.2" r="1.95"/><circle cx="459.1" cy="279.8" r="1.95"/><circle cx="460.8" cy="275.6" r="1.95"/><circle cx="462.7" cy="271.4" r="1.95"/><circle cx="464.9" cy="267.3" r="1.95"/><circle cx="467.2" cy="263.3" r="1.95"/><circle cx="469.7" cy="259.5" r="1.95"/><circle cx="472.4" cy="255.7" r="1.95"/><circle cx="475.2" cy="252.1" r="1.95"/><circle cx="478.2" cy="248.6" r="1.95"/><circle cx="481.4" cy="245.3" r="1.95"/><circle cx="484.7" cy="242.1" r="1.95"/><circle cx="488.2" cy="239.1" r="1.95"/><circle cx="491.9" cy="236.4" r="1.95"/><circle cx="519.9" cy="264.0" r="1.95"/><circle cx="518.1" cy="268.2" r="1.95"/><circle cx="516.0" cy="272.3" r="1.95"/><circle cx="513.8" cy="276.3" r="1.95"/><circle cx="511.3" cy="280.2" r="1.95"/><circle cx="508.7" cy="284.0" r="1.95"/><circle cx="505.9" cy="287.7" r="1.95"/><circle cx="503.0" cy="291.2" r="1.95"/><circle cx="499.9" cy="294.6" r="1.95"/><circle cx="496.6" cy="297.8" r="1.95"/><circle cx="493.2" cy="300.9" r="1.95"/><circle cx="489.6" cy="303.7" r="1.95"/><circle cx="485.8" cy="306.3" r="1.95"/><circle cx="481.8" cy="308.6" r="1.95"/><circle cx="477.6" cy="310.5" r="1.95"/><circle cx="473.2" cy="311.8" r="1.95"/><circle cx="468.6" cy="312.3" r="1.95"/><circle cx="464.1" cy="311.5" r="1.95"/><circle cx="423.0" cy="191.8" r="1.95"/><circle cx="425.2" cy="187.9" r="1.95"/><circle cx="428.7" cy="184.9" r="1.95"/><circle cx="432.9" cy="182.9" r="1.95"/><circle cx="437.3" cy="181.6" r="1.95"/><circle cx="441.8" cy="180.8" r="1.95"/><circle cx="446.4" cy="180.4" r="1.95"/><circle cx="451.0" cy="180.4" r="1.95"/><circle cx="455.6" cy="180.7" r="1.95"/><circle cx="460.1" cy="181.2" r="1.95"/><circle cx="464.7" cy="182.0" r="1.95"/><circle cx="469.2" cy="183.0" r="1.95"/><circle cx="473.6" cy="184.2" r="1.95"/><circle cx="478.0" cy="185.5" r="1.95"/><circle cx="482.3" cy="187.1" r="1.95"/><circle cx="486.6" cy="188.9" r="1.95"/><circle cx="490.7" cy="190.9" r="1.95"/><circle cx="494.8" cy="193.1" r="1.95"/><circle cx="498.7" cy="195.4" r="1.95"/><circle cx="502.5" cy="198.1" r="1.95"/><circle cx="506.0" cy="201.0" r="1.95"/><circle cx="509.3" cy="204.2" r="1.95"/><circle cx="512.3" cy="207.7" r="1.95"/><circle cx="514.7" cy="211.6" r="1.95"/><circle cx="516.2" cy="216.0" r="1.95"/><circle cx="511.4" cy="228.1" r="1.95"/><circle cx="507.4" cy="230.4" r="1.95"/><circle cx="503.1" cy="231.9" r="1.95"/><circle cx="498.6" cy="232.9" r="1.95"/><circle cx="494.0" cy="233.4" r="1.95"/><circle cx="489.4" cy="233.5" r="1.95"/><circle cx="484.8" cy="233.3" r="1.95"/><circle cx="480.3" cy="232.9" r="1.95"/><circle cx="475.7" cy="232.2" r="1.95"/><circle cx="471.2" cy="231.3" r="1.95"/><circle cx="466.7" cy="230.1" r="1.95"/><circle cx="462.3" cy="228.8" r="1.95"/><circle cx="458.0" cy="227.3" r="1.95"/><circle cx="453.7" cy="225.6" r="1.95"/><circle cx="449.5" cy="223.7" r="1.95"/><circle cx="445.5" cy="221.6" r="1.95"/><circle cx="441.5" cy="219.2" r="1.95"/><circle cx="437.7" cy="216.7" r="1.95"/><circle cx="434.0" cy="213.9" r="1.95"/><circle cx="430.6" cy="210.8" r="1.95"/><circle cx="427.5" cy="207.4" r="1.95"/><circle cx="424.9" cy="203.6" r="1.95"/><circle cx="423.1" cy="199.4" r="1.95"/><circle cx="422.4" cy="194.9" r="1.95"/></g>
<circle cx="115" cy="384.5" r="7.7" fill="#fff"/>
<g stroke="#2626c8" stroke-width="1.7"><line x1="102.5" y1="384.5" x2="128" y2="384.5"/><line x1="115" y1="371.5" x2="115" y2="397"/></g>
</svg>

<!-- right panel 1 -->
<div class="a" style="left:736px;top:45px;width:94px;height:1px;background:#fff"></div>
<div class="a" style="left:736px;top:45px;width:2px;height:424px;background:#f8f8f6"></div>
<div class="a" style="left:739px;top:47px;width:90px;height:281px;border-top:1px solid #6c6c6c;border-left:1px solid #6c6c6c;border-right:1px solid #505050;border-bottom:1px solid #505050;box-shadow:inset -1px -1px 0 #fff"></div>
<div class="a" style="left:739px;top:328px;width:90px;height:1.5px;background:#fff"></div>
<div class="a panel t" style="left:739px;top:57.5px;width:86px;text-align:center">工作坐标</div>
<div class="a panel t" style="left:745px;top:76px">X坐标</div><div class="a panel t" style="left:780px;top:76px;width:44px;text-align:right;font-family:'Liberation Mono';font-size:10px;letter-spacing:-0.3px">0.000</div>
<div class="a panel t" style="left:745px;top:96px">Y坐标</div><div class="a panel t" style="left:780px;top:96px;width:44px;text-align:right;font-family:'Liberation Mono';font-size:10px;letter-spacing:-0.3px">0.000</div>
<div class="a panel t" style="left:739px;top:117px;width:86px;text-align:center">机械坐标</div>
<div class="a panel t" style="left:745px;top:136px">X坐标</div><div class="a panel t" style="left:780px;top:136px;width:44px;text-align:right;font-family:'Liberation Mono';font-size:10px;letter-spacing:-0.3px">0.000</div>
<div class="a panel t" style="left:745px;top:153px">Y坐标</div><div class="a panel t" style="left:780px;top:153px;width:44px;text-align:right;font-family:'Liberation Mono';font-size:10px;letter-spacing:-0.3px">0.000</div>
<div class="a panel t" style="left:742px;top:173px">冲孔总量</div><div class="a panel t" style="left:790px;top:173px;width:34px;text-align:right">395</div>
<div class="a panel t" style="left:742px;top:188px">己冲孔量</div><div class="a panel t" style="left:790px;top:188px;width:34px;text-align:right">0</div>
<div class="a panel t" style="left:742px;top:203px">加工计数</div><div class="a panel t" style="left:790px;top:203px;width:34px;text-align:right">0</div>
<div class="a panel t" style="left:739px;top:220px;width:86px;text-align:center">Y轴碰到正限位</div>
<div class="a panel t" style="left:739px;top:236px;width:86px;text-align:center">X轴碰到正限位</div>
<div class="a panel t" style="left:739px;top:255px;width:86px;text-align:center;font-size:11px">模具状态:未回零</div>
<div class="a panel t" style="left:739px;top:270px;width:86px;text-align:center;font-weight:bold;font-size:9px">00 : 00 : 00 : 000</div>

<!-- right panel 2 -->
<div class="a" style="left:739px;top:330px;width:90px;height:140px;border-top:1px solid #6c6c6c;border-left:1px solid #6c6c6c;border-right:1px solid #505050;border-bottom:1px solid #505050;box-shadow:inset -1px -1px 0 #fff"></div>
<div class="a btn" style="left:744px;top:334px;width:11px;height:16px"><div class="a" style="left:2px;top:3px;width:0;height:0;border-top:4px solid transparent;border-bottom:4px solid transparent;border-right:5px solid #000"></div></div>
<div class="a btn" style="left:810.5px;top:334px;width:10.5px;height:16px"><div class="a" style="left:3px;top:3px;width:0;height:0;border-top:4px solid transparent;border-bottom:4px solid transparent;border-left:5px solid #000"></div></div>
<div class="a panel t" style="left:757px;top:338px;width:52px;text-align:center;font-family:'Liberation Mono';font-size:10px;letter-spacing:-0.8px">F 100%</div>
<div class="a btn" style="left:748px;top:360px;width:72px;height:26px;text-align:center;font-size:12px;line-height:24px;color:#222">停止</div>
<div class="a btn" style="left:748px;top:399px;width:21px;height:21px"><div class="a" style="left:3px;top:1px;width:14px;height:4px;background:#333;border-radius:0 0 3px 3px"></div></div>
<div class="a btn" style="left:798px;top:399px;width:21px;height:21px;text-align:center;font-size:11px;line-height:19px;color:#222">松</div>
<div class="a" style="left:743px;top:425px;width:80px;height:28px;background:#fff;border:1.5px solid #7a7a7a;border-radius:2px"></div>
<div class="a t" style="left:745.5px;top:436px;font-size:14.2px;line-height:14px;letter-spacing:-0.4px;background:linear-gradient(to right,#e8a050 0%,#d06070 18%,#b85070 60%,#d85868 100%);-webkit-background-clip:text;background-clip:text;color:transparent">MUSTWAY</div>

<!-- text area -->
<div class="a" style="left:3px;top:397px;width:733px;height:2px;background:#fafaf8"></div>
<div class="a" style="left:5px;top:401px;width:732px;height:67px;background:#fff;border:1px solid #6a6a6a;border-bottom-color:#fff"></div>
<div class="a" style="left:723px;top:402px;width:11px;height:65px;background:#efeee8"></div>
<div class="a btn" style="left:723px;top:402px;width:11px;height:10px"><div class="a" style="left:2px;top:2px;border-left:3px solid transparent;border-right:3px solid transparent;border-bottom:3px solid #000"></div></div>
<div class="a btn" style="left:723px;top:412px;width:11px;height:4px"></div>
<div class="a btn" style="left:723px;top:457px;width:11px;height:10px"><div class="a" style="left:2px;top:3px;border-left:3px solid transparent;border-right:3px solid transparent;border-top:3px solid #000"></div></div>
<div class="a t" style="left:7px;top:418.7px;font-size:12px;line-height:15.5px;letter-spacing:-0.1px;color:#111">S 8.0<br>G00 <svg width="10" height="10" style="vertical-align:-1px"><path d="M1 0L9 9M9 0L1 9" stroke="#444" stroke-width="0.9"/></svg> 0 y 0<br>T8 D8.0</div>

<!-- function bar -->
<div class="a" style="left:3px;top:469px;width:827px;height:1.5px;background:#6e6e6e"></div>
<div class="a" style="left:4px;top:470px;width:2px;height:34px;border-left:1px solid #fff;border-right:1px solid #a8a59e"></div>
<div class="a fk" style="left:5px;width:60px"><div class="fkl">F1</div><svg class="a" style="left:24px;top:16px" width="12" height="12"><text x="2.5" y="10.5" font-family="Liberation Serif" font-weight="bold" font-size="11" fill="#e0d020" stroke="#222" stroke-width="0.6">?</text></svg></div>
<div class="a" style="left:65px;top:471px;width:2px;height:32px;border-left:1px solid #b0ada6;border-right:1px solid #fff"></div>
<div class="a fk" style="left:67px;width:58px"><div class="fkl">F2</div><div class="fkt">加工预览</div></div>
<div class="a" style="left:125px;top:471px;width:2px;height:32px;border-left:1px solid #b0ada6;border-right:1px solid #fff"></div>
<div class="a fk" style="left:127px;width:58px"><div class="fkl">F3</div><svg class="a" style="left:23px;top:17px" width="12" height="10" viewBox="28 30.5 12 10"><path d="M28.5 33.5H32L33 34.5H36V36H31L28.5 39.5Z" fill="#c8c850" stroke="#333" stroke-width="0.8"/><path d="M28.5 39.5L31 36H38.5L36 39.5Z" fill="#e0e070" stroke="#333" stroke-width="0.8"/><path d="M33.5 33C34.5 31 36.5 30.8 37.5 32.5" fill="none" stroke="#333" stroke-width="0.8"/><rect x="37" y="32.5" width="1.6" height="1.6" fill="#222"/></svg></div>
<div class="a" style="left:185px;top:471px;width:2px;height:32px;border-left:1px solid #b0ada6;border-right:1px solid #fff"></div>
<div class="a fk" style="left:187px;width:59px"><div class="fkl">F4</div><div class="fkt">自动加工</div></div>
<div class="a" style="left:246px;top:471px;width:2px;height:32px;border-left:1px solid #b0ada6;border-right:1px solid #fff"></div>
<div class="a fk" style="left:248px;width:59px"><div class="fkl">F5</div><div class="fkt">回装卸点</div></div>
<div class="a" style="left:307px;top:471px;width:2px;height:32px;border-left:1px solid #b0ada6;border-right:1px solid #fff"></div>
<div class="a fk" style="left:309px;width:58px"><div class="fkl">F6</div><div class="fkt">断点加工</div></div>
<div class="a" style="left:367px;top:471px;width:2px;height:32px;border-left:1px solid #b0ada6;border-right:1px solid #fff"></div>
<div class="a fk" style="left:369px;width:59px"><div class="fkl">F7</div><div class="fkt">加工暂停</div></div>
<div class="a" style="left:428px;top:471px;width:2px;height:32px;border-left:1px solid #b0ada6;border-right:1px solid #fff"></div>
<div class="a fk" style="left:430px;width:58px"><div class="fkl">F8</div><div class="fkt">手动操作</div></div>
<div class="a" style="left:488px;top:471px;width:2px;height:32px;border-left:1px solid #b0ada6;border-right:1px solid #fff"></div>
<div class="a fk" style="left:490px;width:58px"><div class="fkl">F9</div><div class="fkt">程序编辑</div></div>

<!-- status bar -->
<div class="a" style="left:0;top:518px;width:833px;height:1px;background:#505050"></div>
<div class="a" style="left:3px;top:504px;width:827px;height:1px;background:#a8a59e"></div>
<div class="a" style="left:3px;top:505px;width:827px;height:1px;background:#fff"></div>
<div class="a t" style="left:4px;top:507px;font-size:8px;line-height:10px;color:#111">若要获取帮助，请按 F1</div>
<div class="a" style="left:771px;top:507px;width:17px;height:11px;border-top:1px solid #a0a0a0;border-left:1px solid #a0a0a0;border-right:1px solid #fff;border-bottom:1px solid #fff"></div>
<div class="a" style="left:789px;top:507px;width:18px;height:11px;border-top:1px solid #a0a0a0;border-left:1px solid #a0a0a0;border-right:1px solid #fff;border-bottom:1px solid #fff;font-size:7px;line-height:10px;text-align:center;color:#222;letter-spacing:-0.3px">NUM</div>
<div class="a" style="left:808px;top:507px;width:20px;height:11px;border-top:1px solid #a0a0a0;border-left:1px solid #a0a0a0;border-right:1px solid #fff;border-bottom:1px solid #fff"></div>
</body></html>
